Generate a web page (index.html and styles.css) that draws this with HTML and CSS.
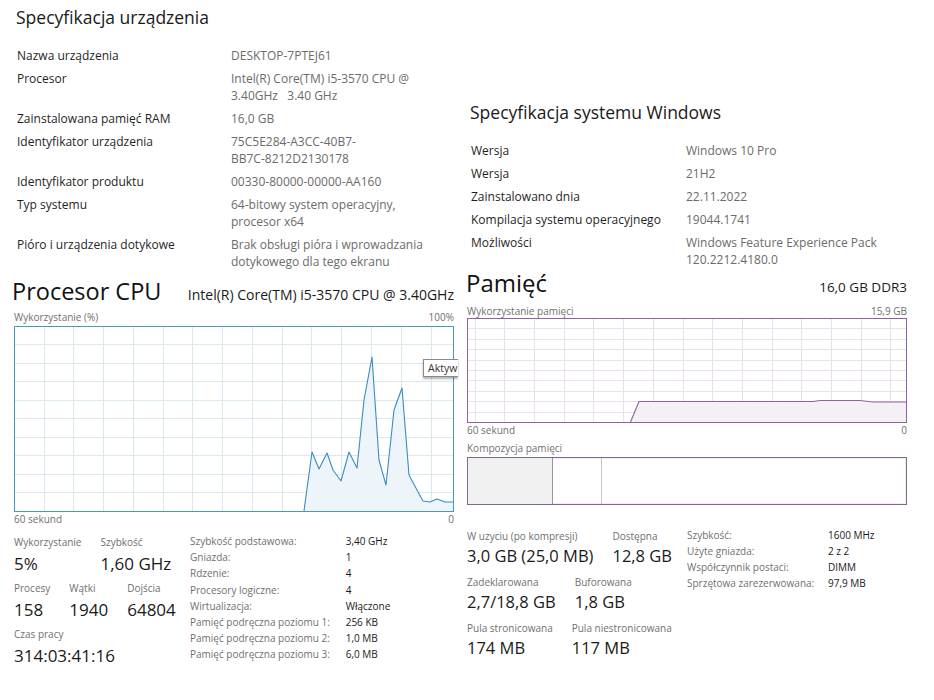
FILE: index.html
```html
<!DOCTYPE html>
<html lang="pl">
<head>
<meta charset="utf-8">
<title>Specyfikacja i wydajność</title>
<link rel="stylesheet" href="styles.css">
</head>
<body>
<div class="page">
  <div class="col col-left">
    <section class="spec device">
      <h2 class="spec-title">Specyfikacja urządzenia</h2>
      <dl class="spec-list">
        <dt>Nazwa urządzenia</dt><dd>DESKTOP-7PTEJ61</dd>
        <dt>Procesor</dt><dd>Intel(R) Core(TM) i5-3570 CPU @<br>3.40GHz&nbsp;&nbsp;&nbsp;3.40 GHz</dd>
        <dt>Zainstalowana pamięć RAM</dt><dd>16,0 GB</dd>
        <dt>Identyfikator urządzenia</dt><dd>75C5E284-A3CC-40B7-<br>BB7C-8212D2130178</dd>
        <dt>Identyfikator produktu</dt><dd>00330-80000-00000-AA160</dd>
        <dt>Typ systemu</dt><dd>64-bitowy system operacyjny,<br>procesor x64</dd>
        <dt>Pióro i urządzenia dotykowe</dt><dd>Brak obsługi pióra i wprowadzania<br>dotykowego dla tego ekranu</dd>
      </dl>
    </section>

    <section class="perf cpu">
      <div class="perf-head">
        <h1 class="perf-title">Procesor CPU</h1>
        <span class="perf-sub">Intel(R) Core(TM) i5-3570 CPU @ 3.40GHz</span>
      </div>
      <div class="axis axis-top"><span>Wykorzystanie (%)</span><span>100%</span></div>
      <div class="graph">
        <svg class="graph-svg" width="440" height="186" viewBox="0 0 440 186">
          <path class="grid-cpu" shape-rendering="crispEdges" d="M0 18.5H440M0 37.5H440M0 55.5H440M0 74.5H440M0 92.5H440M0 111.5H440M0 129.5H440M0 148.5H440M0 166.5H440M30.5 0V186M59.5 0V186M89.5 0V186M119.5 0V186M149.5 0V186M178.5 0V186M208.5 0V186M238.5 0V186M268.5 0V186M297.5 0V186M327.5 0V186M357.5 0V186M387.5 0V186M417.5 0V186"/>
          <polygon class="fill-cpu" points="290,185 298,126 305,143 313,127 319,144 327,155 335,126 343,142 350,74 358,31 365,134 372,159 380,84 388,62 395,149 403,164 409,175 416,176 423,173 431,176 439,176 439,185"/>
          <polyline class="line-cpu" points="290,185 298,126 305,143 313,127 319,144 327,155 335,126 343,142 350,74 358,31 365,134 372,159 380,84 388,62 395,149 403,164 409,175 416,176 423,173 431,176 439,176"/>
          <rect class="frame-cpu" x="0.5" y="0.5" width="439" height="185" shape-rendering="crispEdges"/>
        </svg>
        <div class="tooltip">Aktyw</div>
      </div>
      <div class="axis"><span>60 sekund</span><span>0</span></div>

      <div class="stats cpu-stats">
        <div class="stat-left">
          <div class="stat-row">
            <div class="stat"><div class="stat-label">Wykorzystanie</div><div class="stat-value">5%</div></div>
            <div class="stat"><div class="stat-label">Szybkość</div><div class="stat-value">1,60 GHz</div></div>
          </div>
          <div class="stat-row">
            <div class="stat"><div class="stat-label">Procesy</div><div class="stat-value">158</div></div>
            <div class="stat"><div class="stat-label">Wątki</div><div class="stat-value">1940</div></div>
            <div class="stat"><div class="stat-label">Dojścia</div><div class="stat-value">64804</div></div>
          </div>
          <div class="stat-row">
            <div class="stat"><div class="stat-label">Czas pracy</div><div class="stat-value">314:03:41:16</div></div>
          </div>
        </div>
        <dl class="stat-table">
          <dt>Szybkość podstawowa:</dt><dd>3,40 GHz</dd>
          <dt>Gniazda:</dt><dd>1</dd>
          <dt>Rdzenie:</dt><dd>4</dd>
          <dt>Procesory logiczne:</dt><dd>4</dd>
          <dt>Wirtualizacja:</dt><dd>Włączone</dd>
          <dt>Pamięć podręczna poziomu 1:</dt><dd>256 KB</dd>
          <dt>Pamięć podręczna poziomu 2:</dt><dd>1,0 MB</dd>
          <dt>Pamięć podręczna poziomu 3:</dt><dd>6,0 MB</dd>
        </dl>
      </div>
    </section>
  </div>

  <div class="col col-right">
    <section class="spec windows">
      <h2 class="spec-title">Specyfikacja systemu Windows</h2>
      <dl class="spec-list">
        <dt>Wersja</dt><dd>Windows 10 Pro</dd>
        <dt>Wersja</dt><dd>21H2</dd>
        <dt>Zainstalowano dnia</dt><dd>22.11.2022</dd>
        <dt>Kompilacja systemu operacyjnego</dt><dd>19044.1741</dd>
        <dt>Możliwości</dt><dd>Windows Feature Experience Pack<br>120.2212.4180.0</dd>
      </dl>
    </section>

    <section class="perf mem">
      <div class="perf-head">
        <h1 class="perf-title">Pamięć</h1>
        <span class="perf-sub">16,0 GB DDR3</span>
      </div>
      <div class="axis axis-top"><span>Wykorzystanie pamięci</span><span>15,9 GB</span></div>
      <div class="graph">
        <svg class="graph-svg" width="440" height="105" viewBox="0 0 440 105">
          <path class="grid-mem" shape-rendering="crispEdges" d="M0 10.5H440M0 21.5H440M0 31.5H440M0 42.5H440M0 52.5H440M0 62.5H440M0 73.5H440M0 83.5H440M0 94.5H440M8.5 0V105M37.5 0V105M67.5 0V105M97.5 0V105M126.5 0V105M156.5 0V105M186.5 0V105M216.5 0V105M245.5 0V105M275.5 0V105M305.5 0V105M334.5 0V105M364.5 0V105M394.5 0V105M423.5 0V105"/>
          <polygon class="fill-mem" points="163.5,104 172,83.5 346,83.5 353,82.5 393,82.5 406,84 439.5,84 439.5,104"/>
          <polyline class="line-mem" points="163.5,104 172,83.5 346,83.5 353,82.5 393,82.5 406,84 439.5,84"/>
          <rect class="frame-mem" x="0.5" y="0.5" width="439" height="104" shape-rendering="crispEdges"/>
        </svg>
      </div>
      <div class="axis"><span>60 sekund</span><span>0</span></div>
      <div class="axis axis-comp"><span>Kompozycja pamięci</span></div>
      <div class="composition">
        <div class="comp-seg comp-used"></div>
        <div class="comp-seg comp-modified"></div>
        <div class="comp-seg comp-free"></div>
      </div>

      <div class="stats mem-stats">
        <div class="stat-left">
          <div class="stat-row">
            <div class="stat"><div class="stat-label">W uzyciu (po kompresji)</div><div class="stat-value">3,0 GB (25,0 MB)</div></div>
            <div class="stat"><div class="stat-label">Dostępna</div><div class="stat-value">12,8 GB</div></div>
          </div>
          <div class="stat-row">
            <div class="stat"><div class="stat-label">Zadeklarowana</div><div class="stat-value">2,7/18,8 GB</div></div>
            <div class="stat"><div class="stat-label">Buforowana</div><div class="stat-value">1,8 GB</div></div>
          </div>
          <div class="stat-row">
            <div class="stat"><div class="stat-label">Pula stronicowana</div><div class="stat-value">174 MB</div></div>
            <div class="stat"><div class="stat-label">Pula niestronicowana</div><div class="stat-value">117 MB</div></div>
          </div>
        </div>
        <dl class="stat-table">
          <dt>Szybkość:</dt><dd>1600 MHz</dd>
          <dt>Użyte gniazda:</dt><dd>2 z 2</dd>
          <dt>Współczynnik postaci:</dt><dd>DIMM</dd>
          <dt>Sprzętowa zarezerwowana:</dt><dd>97,9 MB</dd>
        </dl>
      </div>
    </section>
  </div>
</div>
</body>
</html>
```

FILE: styles.css
```css
html, body {
  margin: 0;
  padding: 0;
  background: #ffffff;
}

.page {
  display: flex;
  width: 934px;
  height: 700px;
  overflow: hidden;
  font-family: "Open Sans", "Noto Sans", sans-serif;
  color: #1a1a1a;
}

.col {
  flex: none;
}

.col-left {
  width: 460px;
}

.col-right {
  width: 474px;
  padding-top: 100px;
}

/* ---------- specification blocks ---------- */

.spec-title {
  margin: 0;
  font-size: 17.5px;
  line-height: 24px;
  font-weight: 400;
  color: #1a1a1a;
}

.spec-list {
  display: grid;
  row-gap: 6px;
  margin: 18px 0 0 1px;
  font-size: 12px;
  line-height: 17px;
}

.spec-list dt {
  color: #1f1f1f;
  white-space: nowrap;
}

.spec-list dd {
  margin: 0;
  color: #6b6b6b;
  white-space: nowrap;
}

.device {
  box-sizing: border-box;
  height: 270px;
  padding: 5px 0 0 16px;
}

.device .spec-list {
  grid-template-columns: 214px auto;
}

.windows {
  padding-left: 10px;
}

.windows .spec-list {
  grid-template-columns: 215px auto;
}

/* ---------- performance panels ---------- */

.perf {
  width: 440px;
}

.cpu {
  padding: 6px 0 0 14px;
}

.mem {
  padding: 0 0 0 7px;
}

.perf-head {
  display: flex;
  justify-content: space-between;
  align-items: baseline;
}

.cpu .perf-head {
  margin-left: -2px;
}

.mem .perf-head {
  margin-left: -1px;
}

.perf-title {
  margin: 0;
  font-weight: 400;
  line-height: 30px;
  color: #111111;
}

.cpu .perf-title {
  font-size: 23.5px;
}

.mem .perf-title {
  font-size: 24px;
}

.perf-sub {
  color: #1a1a1a;
}

.cpu .perf-sub {
  font-size: 14px;
}

.mem .perf-sub {
  font-size: 13.5px;
}

.axis {
  display: flex;
  justify-content: space-between;
  font-size: 10px;
  line-height: 14px;
  color: #707070;
  white-space: nowrap;
}

.cpu .axis-top {
  margin-top: 4px;
}

.mem .axis-top {
  margin-top: 6px;
}

.axis-comp {
  margin-top: 4px;
}

.graph {
  position: relative;
}

.cpu .graph {
  margin-top: 2px;
  height: 186px;
}

.mem .graph {
  height: 105px;
}

.graph-svg {
  display: block;
}

.grid-cpu {
  stroke: #d9e8f1;
  stroke-width: 1;
  fill: none;
}

.fill-cpu {
  fill: #eef5fa;
  stroke: none;
}

.line-cpu {
  fill: none;
  stroke: #3a8dbd;
  stroke-width: 1.1;
  stroke-linejoin: round;
}

.frame-cpu {
  fill: none;
  stroke: #4a98bf;
  stroke-width: 1;
}

.grid-mem {
  stroke: #ebdeee;
  stroke-width: 1;
  fill: none;
}

.fill-mem {
  fill: #f5f0f6;
  stroke: none;
}

.line-mem {
  fill: none;
  stroke: #8f619f;
  stroke-width: 1.1;
}

.frame-mem {
  fill: none;
  stroke: #8f619f;
  stroke-width: 1;
}

.tooltip {
  position: absolute;
  left: 409px;
  top: 33px;
  box-sizing: border-box;
  width: 35px;
  height: 18px;
  padding-left: 4px;
  background: #ffffff;
  border: 1px solid #8a8a8a;
  border-right: none;
  box-shadow: 0 2px 2px rgba(0, 0, 0, 0.3);
  font-size: 10.5px;
  line-height: 16px;
  color: #333333;
  overflow: hidden;
  white-space: nowrap;
}

.composition {
  display: flex;
  box-sizing: border-box;
  height: 48px;
  margin-top: 2px;
  border: 1px solid #806a88;
  box-shadow: inset 0 0 0 1px #f6ecf8;
}

.comp-seg {
  box-sizing: border-box;
}

.comp-used {
  width: 85px;
  background: #f1f1f1;
  border-right: 1px solid #a08ea6;
}

.comp-modified {
  width: 49px;
  border-right: 1px solid #c8c8c8;
}

.comp-free {
  flex: 1;
}

/* ---------- stats ---------- */

.stats {
  display: flex;
  align-items: flex-start;
}

.cpu-stats {
  margin-top: 9px;
}

.mem-stats {
  margin-top: 21.5px;
}

.cpu-stats .stat-left {
  width: 176px;
}

.mem-stats .stat-left {
  width: 220px;
  margin-top: 2px;
}

.stat-row {
  display: flex;
  gap: 19px;
}

.cpu-stats .stat-row + .stat-row {
  margin-top: 6px;
}

.mem-stats .stat-row + .stat-row {
  margin-top: 8px;
}

.stat {
  white-space: nowrap;
}

.stat-label {
  font-size: 10px;
  line-height: 14px;
  color: #6f6f6f;
}

.stat-value {
  line-height: 22px;
  color: #1a1a1a;
}

.cpu-stats .stat-value {
  font-size: 17px;
  margin-top: 4px;
}

.mem-stats .stat-value {
  font-size: 16.5px;
  margin-top: 2px;
}

.stat-table {
  display: grid;
  margin: 0;
  font-size: 10px;
  white-space: nowrap;
}

.cpu-stats .stat-table {
  grid-template-columns: 155.7px auto;
  line-height: 16.2px;
  margin-top: -2px;
}

.mem-stats .stat-table {
  grid-template-columns: 141px auto;
  line-height: 16px;
}

.stat-table dt {
  color: #707070;
}

.stat-table dd {
  margin: 0;
  color: #1a1a1a;
}
```
